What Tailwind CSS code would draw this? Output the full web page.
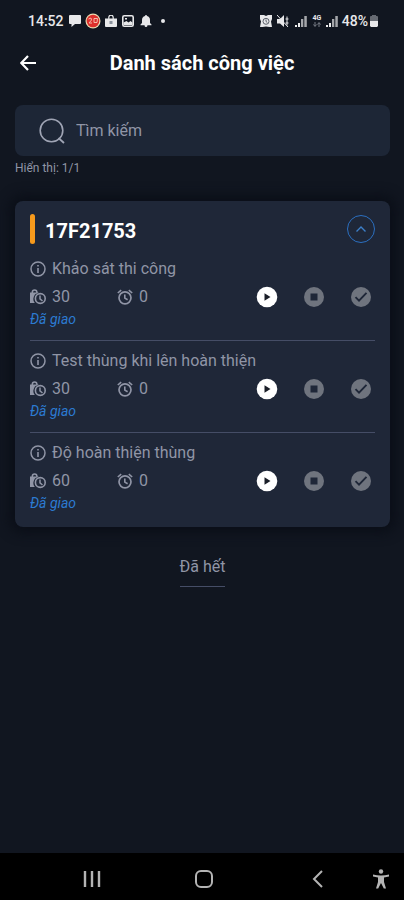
<!DOCTYPE html>
<html lang="vi">
<head>
<meta charset="utf-8">
<meta name="viewport" content="width=device-width, initial-scale=1">
<title>Danh sách công việc</title>
<script src="https://cdn.jsdelivr.net/npm/@tailwindcss/browser@4"></script>
</head>
<body class="flex min-h-screen flex-col bg-[#111620] font-[Roboto,'Noto_Sans',sans-serif] text-[#9095a6]">
<svg class="hidden" aria-hidden="true">
  <symbol id="info" viewBox="0 0 16 16"><circle cx="8" cy="8" r="7" fill="none" stroke="currentColor" stroke-width="1.5"/><path d="M8 7v5M8 4v1.6" stroke="currentColor" stroke-width="1.6"/></symbol>
  <symbol id="bagclock" viewBox="0 0 16 16"><path d="M2.300 4.500V3.200a2.300 2.300 0 0 1 4.600 0v1.300" fill="none" stroke="currentColor" stroke-width="1.500"/><path d="M0 3.500h9.200A6.500 6.500 0 0 0 4.800 14H0z" fill="currentColor"/><circle cx="10.300" cy="9.500" r="4.900" fill="none" stroke="currentColor" stroke-width="1.600"/><path d="M10 6.500v3.300l2.500 2.200" fill="none" stroke="currentColor" stroke-width="1.500"/></symbol>
  <symbol id="alarm" viewBox="0 0 16 16"><circle cx="8" cy="8.800" r="6" fill="none" stroke="currentColor" stroke-width="1.700"/><path d="M7.800 5.500v3.600l2.800 1.700M.8 4l3.400-2.900M15.200 4l-3.400-2.900" fill="none" stroke="currentColor" stroke-width="1.600"/></symbol>
  <symbol id="play" viewBox="0 0 22 22"><circle cx="11" cy="11" r="10.300" fill="#fff"/><path d="M8.500 7.300v7.400l6-3.700z" fill="#1a1e28"/></symbol>
  <symbol id="stop" viewBox="0 0 22 22"><circle cx="11" cy="11" r="10" fill="#6f747e"/><rect x="7.500" y="7.500" width="7" height="7" fill="#1f2738"/></symbol>
  <symbol id="check" viewBox="0 0 22 22"><circle cx="11" cy="11" r="10" fill="#6f747e"/><path d="M5.500 11.200l3.500 3.500 7.500-7.900" fill="none" stroke="#1f2738" stroke-width="1.900"/></symbol>
  <symbol id="signal" viewBox="0 0 12 12"><path d="M0 10h2v2H0zM3 8h2v4H3z" fill="#eee"/><path d="M6 4h2.300v8H6zM9.300 1h2.500v11H9.300z" fill="#a5a7ab"/></symbol>
</svg>

<div class="flex h-[41px] items-center justify-between pr-[25px] pl-7 text-[#e8e8ea]">
  <div class="flex items-center gap-1">
    <span class="mr-px text-sm font-medium">14:52</span>
    <svg class="h-3 w-3" viewBox="0 0 12 12"><path d="M1 0h10a1 1 0 0 1 1 1v7a1 1 0 0 1-1 1H6l-3.500 3V9H1a1 1 0 0 1-1-1V1a1 1 0 0 1 1-1z" fill="currentColor"/></svg>
    <svg class="h-4 w-4" viewBox="0 0 16 16"><circle cx="8" cy="8" r="7.500" fill="#e8d9b0"/><circle cx="8" cy="8" r="6.300" fill="#dc2f2b"/><path d="M3.500 6l2.500-1 .5 2-2.500 3h3M9 5.500h3.500l-.5 4H9z" fill="none" stroke="#f5b7a8" stroke-width="1"/></svg>
    <svg class="h-3 w-3" viewBox="0 0 12 12"><path d="M3.800 4V2.400a2.200 2.200 0 0 1 4.400 0V4" fill="none" stroke="currentColor" stroke-width="1.200"/><path d="M0 3.500h12V11a1 1 0 0 1-1 1H1a1 1 0 0 1-1-1z" fill="currentColor"/><path d="M4.500 6h3v3h-3z" fill="#8b929d"/></svg>
    <svg class="mx-px h-3 w-3" viewBox="0 0 12 12"><rect x=".8" y=".8" width="10.400" height="10.400" rx="1.500" fill="none" stroke="currentColor" stroke-width="1.600"/><path d="M1.500 10V7.500L4.500 6l2 1.500L8.500 6l2 1.500V10z" fill="currentColor"/><path d="M3 3h2v1.500H3z" fill="currentColor"/></svg>
    <svg class="mx-px h-3 w-3" viewBox="0 0 12 12"><path d="M6 0a1 1 0 0 1 1 1c2 .5 3 2 3 4v3l1.500 1.500v.7H.5v-.7L2 8V5c0-2 1-3.500 3-4a1 1 0 0 1 1-1zM4.600 10h2.800v.8a1.400 1.200 0 0 1-2.800 0z" fill="currentColor"/></svg>
    <span class="ml-1 h-1 w-1 rounded-full bg-current"></span>
  </div>
  <div class="flex items-center gap-1">
    <svg class="h-3 w-3" viewBox="0 0 12 12"><path d="M0 0h4l2 1 2-1h4v4l-1 2.500 1 5.500H9.500L6 11.500 2.500 12H0l1-5.500L0 4z" fill="currentColor"/><circle cx="6" cy="6.300" r="3" fill="none" stroke="#3a404b" stroke-width=".8"/><path d="M6 4.500v2l1.300 1" fill="none" stroke="#3a404b" stroke-width=".8"/></svg>
    <svg class="mx-px h-3 w-3" viewBox="0 0 12 12"><path d="M0 4h3l4-4v12L3 8.500H0z" fill="currentColor"/><path d="M0 0l11 12M8.500 4h3M8.500 8h3M10 1.500v9" stroke="currentColor" stroke-width="1"/></svg>
    <svg class="mx-px h-3 w-3"><use href="#signal"/></svg>
    <span class="mx-px flex w-2 flex-col items-center text-[7px] leading-[7px] font-bold">4G<svg class="h-[5px] w-2" viewBox="0 0 8 5"><path d="M2 0v4M.5 2.500L2 4.500l1.500-2M6 5V1M4.500 2.500L6 .5l1.500 2" fill="none" stroke="#777b84"/></svg></span>
    <svg class="h-3 w-3"><use href="#signal"/></svg>
    <span class="flex items-center gap-px text-sm font-medium">48%<svg class="h-3 w-2.5" viewBox="0 0 10 12"><path d="M3 0h4v1h1.500l.5 1v4H1V2l.5-1H3z" fill="#666a72"/><path d="M1 6h8v5l-1 1H2l-1-1z" fill="currentColor"/></svg></span>
  </div>
</div>

<header class="grid h-11 grid-cols-[40px_1fr_40px] items-center px-2">
  <button type="button" aria-label="Quay lại" class="flex h-10 w-10 items-center justify-center text-white"><svg class="h-4 w-4" viewBox="0 0 16 16"><path d="M16 8H1.500M8 1L1.200 8 8 15" fill="none" stroke="currentColor" stroke-width="2.200"/></svg></button>
  <h1 class="text-center text-xl leading-6 font-bold text-white">Danh sách công việc</h1>
</header>

<main class="flex flex-1 flex-col pt-5 pr-[14px] pl-[15px]">
  <label class="flex h-[51px] items-center gap-[11px] rounded-lg bg-[#1d2636] pl-6">
    <svg class="h-[26px] w-[26px] shrink-0" viewBox="0 0 26 26"><circle cx="12.500" cy="12.500" r="11.300" fill="none" stroke="#a0a5b5" stroke-width="1.600"/><path d="M19.500 20l5.500 5" stroke="#a0a5b5" stroke-width="1.800"/></svg>
    <input type="search" aria-label="Tìm kiếm" placeholder="Tìm kiếm" class="min-w-0 flex-1 bg-transparent text-base outline-none placeholder:text-[#9095a6]">
  </label>
  <p class="mt-1 text-xs leading-4">Hiển thị: 1/1</p>

  <section class="mt-[25px] rounded-lg bg-[#1f2738] px-[15px] pt-[13px] pb-4 shadow-[0_0_12px_6px_#0b0f18]">
    <div class="mb-[5px] flex h-[30px] items-center">
      <span class="h-[30px] w-[5px] rounded-sm bg-[#f79a1c]"></span>
      <h2 class="ml-[10px] flex-1 pt-1 text-xl leading-6 font-bold text-white">17F21753</h2>
      <button type="button" aria-label="Thu gọn" class="flex h-7 w-7 items-center justify-center rounded-full border border-[#2b6fc0] text-[#3d7fc9]"><svg class="h-3 w-3" viewBox="0 0 12 12"><path d="M1.500 8.500L6 4l4.500 4.500" fill="none" stroke="currentColor" stroke-width="1.400"/></svg></button>
    </div>
    <ul class="divide-y divide-[#454d66]">
      <li class="pt-2 pb-[13px]">
        <h3 class="flex items-center gap-[6px] text-base leading-6"><svg class="h-4 w-4"><use href="#info"/></svg>Khảo sát thi công</h3>
        <div class="mt-[2px] flex h-7 items-center">
          <span class="flex w-[87px] items-center gap-[6px]"><svg class="h-4 w-4"><use href="#bagclock"/></svg>30</span>
          <span class="flex flex-1 items-center gap-[6px]"><svg class="h-4 w-4"><use href="#alarm"/></svg>0</span>
          <div class="flex gap-[25px] pr-[3px]">
            <button type="button" aria-label="Bắt đầu"><svg class="h-[22px] w-[22px]"><use href="#play"/></svg></button>
            <button type="button" aria-label="Dừng"><svg class="h-[22px] w-[22px]"><use href="#stop"/></svg></button>
            <button type="button" aria-label="Hoàn thành"><svg class="h-[22px] w-[22px]"><use href="#check"/></svg></button>
          </div>
        </div>
        <p class="text-sm leading-4 text-[#2c7bd2] italic">Đã giao</p>
      </li>
      <li class="pt-2 pb-[13px]">
        <h3 class="flex items-center gap-[6px] text-base leading-6"><svg class="h-4 w-4"><use href="#info"/></svg>Test thùng khi lên hoàn thiện</h3>
        <div class="mt-[2px] flex h-7 items-center">
          <span class="flex w-[87px] items-center gap-[6px]"><svg class="h-4 w-4"><use href="#bagclock"/></svg>30</span>
          <span class="flex flex-1 items-center gap-[6px]"><svg class="h-4 w-4"><use href="#alarm"/></svg>0</span>
          <div class="flex gap-[25px] pr-[3px]">
            <button type="button" aria-label="Bắt đầu"><svg class="h-[22px] w-[22px]"><use href="#play"/></svg></button>
            <button type="button" aria-label="Dừng"><svg class="h-[22px] w-[22px]"><use href="#stop"/></svg></button>
            <button type="button" aria-label="Hoàn thành"><svg class="h-[22px] w-[22px]"><use href="#check"/></svg></button>
          </div>
        </div>
        <p class="text-sm leading-4 text-[#2c7bd2] italic">Đã giao</p>
      </li>
      <li class="pt-2">
        <h3 class="flex items-center gap-[6px] text-base leading-6"><svg class="h-4 w-4"><use href="#info"/></svg>Độ hoàn thiện thùng</h3>
        <div class="mt-[2px] flex h-7 items-center">
          <span class="flex w-[87px] items-center gap-[6px]"><svg class="h-4 w-4"><use href="#bagclock"/></svg>60</span>
          <span class="flex flex-1 items-center gap-[6px]"><svg class="h-4 w-4"><use href="#alarm"/></svg>0</span>
          <div class="flex gap-[25px] pr-[3px]">
            <button type="button" aria-label="Bắt đầu"><svg class="h-[22px] w-[22px]"><use href="#play"/></svg></button>
            <button type="button" aria-label="Dừng"><svg class="h-[22px] w-[22px]"><use href="#stop"/></svg></button>
            <button type="button" aria-label="Hoàn thành"><svg class="h-[22px] w-[22px]"><use href="#check"/></svg></button>
          </div>
        </div>
        <p class="text-sm leading-4 text-[#2c7bd2] italic">Đã giao</p>
      </li>
    </ul>
  </section>
  <p class="mt-7 self-center border-b border-[#454d66] pb-[7px] text-base leading-6">Đã hết</p>
</main>

<nav aria-label="Điều hướng hệ thống" class="grid h-[47px] grid-cols-[1fr_72px_1fr] items-center bg-black pt-1 pl-1 text-[#b4b4b4]">
  <button type="button" aria-label="Gần đây" class="ml-3 justify-self-center"><svg class="h-[18px] w-[18px]" viewBox="0 0 18 18"><path d="M2 1v16M9 1v16M16 1v16" stroke="currentColor" stroke-width="2.400"/></svg></button>
  <button type="button" aria-label="Trang chủ" class="justify-self-center"><svg class="h-5 w-5" viewBox="0 0 20 20"><rect x="2" y="2" width="16" height="16" rx="5" fill="none" stroke="currentColor" stroke-width="2"/></svg></button>
  <div class="flex items-center justify-end gap-12 pr-[14px]">
    <button type="button" aria-label="Trở về"><svg class="h-[18px] w-3" viewBox="0 0 12 18"><path d="M10 1L2 9l8 8" fill="none" stroke="currentColor" stroke-width="2"/></svg></button>
    <button type="button" aria-label="Trợ năng"><svg class="h-5 w-[18px]" viewBox="0 0 18 20"><circle cx="9" cy="2.500" r="2.200" fill="currentColor"/><path d="M1 5.500c5 1.300 11 1.300 16 0v2l-5 1V13l2 6.500h-2.200L9 14l-2.800 5.500H4L6 13V8.500l-5-1z" fill="currentColor"/></svg></button>
  </div>
</nav>
</body>
</html>
